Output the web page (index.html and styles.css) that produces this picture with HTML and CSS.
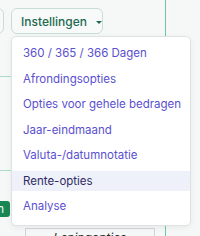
FILE: index.html
```html
<!DOCTYPE html>
<html lang="nl">
<head>
    <meta charset="UTF-8">
    <meta name="viewport" content="width=device-width, initial-scale=1.0">
    <title>Instellingen</title>
    <link rel="stylesheet" href="styles.css">
</head>
<body>
    <div class="page">
        <div class="toolbar">
            <button class="btn btn-prev"></button>
            <div class="dropdown">
                <button class="btn btn-settings">Instellingen <span class="caret"></span></button>
                <ul class="menu">
                    <li>360 / 365 / 366 Dagen</li>
                    <li>Afrondingsopties</li>
                    <li>Opties voor gehele bedragen</li>
                    <li>Jaar-eindmaand</li>
                    <li>Valuta-/datumnotatie</li>
                    <li class="active">Rente-opties</li>
                    <li>Analyse</li>
                </ul>
            </div>
        </div>

        <!-- achterliggende inhoud -->
        <div class="row row-first"></div>
        <div class="row row-second"></div>
        <div class="actions">
            <button class="btn-go">Berekenen</button>
        </div>
        <div class="options-box">
            <span>Leningopties</span>
        </div>
    </div>
</body>
</html>
```

FILE: styles.css
```css
body {
    margin: 0;
    background: #f6f8f8;
    font-family: Inter, "Noto Sans", sans-serif;
    overflow: hidden;
    height: 236px;
}
.page {
    width: 165px;
    height: 236px;
    border-right: 1px solid #6cc7a6;
}
.toolbar {
    display: flex;
    align-items: flex-start;
    padding-top: 8px;
    gap: 7px;
}
.btn {
    font-family: Inter, "Noto Sans", sans-serif;
    background: #f8faf9;
    border: 1px solid #c9ddd5;
    border-radius: 6px;
    color: #1e6a50;
    font-size: 12px;
    font-weight: 500;
    height: 26px;
    padding: 0 8px;
    white-space: nowrap;
}
.btn-prev {
    width: 60px;
    margin-left: -56px;
}
.dropdown {
    position: relative;
}
.btn-settings {
    width: 92px;
    text-align: left;
    padding-left: 9px;
}
.caret {
    display: inline-block;
    margin-left: 6px;
    vertical-align: 2px;
    border-left: 3px solid transparent;
    border-right: 3px solid transparent;
    border-top: 3px solid #1e6a50;
}
.menu {
    position: absolute;
    top: 28px;
    left: 0;
    z-index: 10;
    width: 178px;
    margin: 0;
    padding: 6px 0 9px;
    list-style: none;
    background: #fff;
    border: 1px solid #dde2e4;
    border-radius: 5px;
    box-shadow: 0 2px 6px rgba(0, 0, 0, 0.06);
    display: flex;
    flex-direction: column;
    gap: 5.5px;
}
.menu li {
    font-size: 11.5px;
    line-height: 20px;
    padding: 0 11px;
    color: #5a4fcf;
    white-space: nowrap;
}
.menu li.active {
    background: #eef1fa;
    color: #2e2b63;
}
.row {
    border-bottom: 1px solid #a9dcc8;
}
.row-first {
    height: 42px;
}
.row-second {
    height: 93px;
}
.actions {
    padding-top: 26px;
}
.btn-go {
    font-family: Inter, "Noto Sans", sans-serif;
    background: #198754;
    color: #fff;
    border: none;
    border-radius: 3px;
    height: 16px;
    width: 70px;
    margin-left: -60px;
    font-size: 11px;
    text-align: right;
    padding: 0 6px 0 0;
}
.options-box {
    margin: 11px 0 0 25px;
    width: 128px;
    border: 1px solid #cfd6d9;
    border-bottom: none;
    text-align: center;
    font-style: italic;
    font-size: 12px;
    color: #2a2f33;
    padding-top: 1px;
}
```
